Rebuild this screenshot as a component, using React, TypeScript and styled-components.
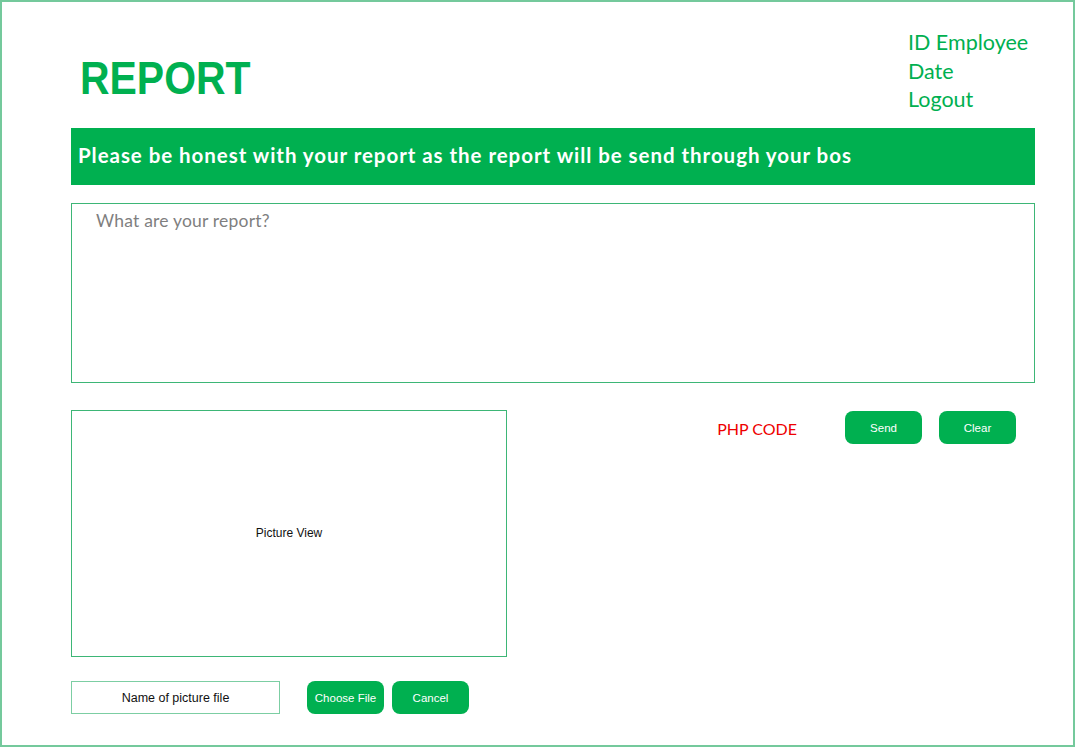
import { createGlobalStyle, styled } from "styled-components";

const GlobalStyle = createGlobalStyle`
  html, body {
    margin: 0;
    padding: 0;
    background: #ffffff;
  }
  * {
    box-sizing: border-box;
  }
`;

const Frame = styled.div`
  width: 1075px;
  height: 747px;
  border: 2px solid #74c99c;
  padding: 0 38px 0 69px;
  display: flex;
  flex-direction: column;
  font-family: Lato, "Liberation Sans", sans-serif;
`;

const Header = styled.div`
  height: 126px;
  display: flex;
  justify-content: space-between;
  align-items: flex-start;
`;

const Title = styled.h1`
  margin: 53px 0 0 9px;
  font-family: "Liberation Sans", Arial, sans-serif;
  font-size: 46px;
  font-weight: 700;
  line-height: 1;
  color: #00b050;
  transform: scaleX(0.89);
  transform-origin: left center;
`;

const UserMenu = styled.ul`
  list-style: none;
  margin: 26px 0 0 0;
  padding: 0;
  width: 127px;
  li {
    font-size: 21.5px;
    line-height: 28.5px;
    color: #00b050;
    cursor: pointer;
  }
`;

const Banner = styled.div`
  height: 57px;
  background-color: #00b050;
  color: #ffffff;
  font-weight: 700;
  font-size: 20.5px;
  letter-spacing: 0.95px;
  display: flex;
  align-items: center;
  padding: 0 0 3px 7px;
`;

const ReportInput = styled.textarea`
  margin-top: 18px;
  height: 180px;
  width: 100%;
  border: 1px solid #3db676;
  resize: none;
  padding: 6px 24px;
  font-family: Lato, "Liberation Sans", sans-serif;
  font-size: 17.5px;
  letter-spacing: 0.2px;
  color: #333;
  outline: none;
  &::placeholder {
    color: #7f7f7f;
  }
`;

const Middle = styled.div`
  margin-top: 27px;
  display: flex;
  align-items: flex-start;
`;

const PictureView = styled.div`
  width: 436px;
  height: 247px;
  border: 1px solid #3db676;
  display: flex;
  align-items: center;
  justify-content: center;
  font-family: "Liberation Sans", Arial, sans-serif;
  font-size: 12px;
  color: #111;
  padding-bottom: 2px;
`;

const Actions = styled.div`
  flex: 1;
  display: flex;
  align-items: center;
  justify-content: flex-end;
  gap: 17px;
  padding-right: 19px;
  margin-top: 1px;
`;

const PhpCode = styled.span`
  color: #ee0000;
  font-size: 16px;
  margin-right: 31px;
  padding-top: 2px;
`;

const Button = styled.button`
  width: 77px;
  height: 33px;
  border: none;
  border-radius: 8px;
  background-color: #00b050;
  color: #ffffff;
  font-family: "Liberation Sans", Arial, sans-serif;
  font-size: 11.5px;
  cursor: pointer;
  padding: 0;
`;

const Bottom = styled.div`
  margin-top: 24px;
  display: flex;
  align-items: center;
  gap: 8px;
`;

const FileName = styled.div`
  width: 209px;
  height: 33px;
  border: 1px solid #7ccea3;
  display: flex;
  align-items: center;
  justify-content: center;
  font-family: "Liberation Sans", Arial, sans-serif;
  font-size: 12.5px;
  color: #111;
  margin-right: 19px;
`;

export default function App() {
  return (
    <>
      <GlobalStyle />
      <Frame>
        <Header>
          <Title>REPORT</Title>
          <UserMenu>
            <li>ID Employee</li>
            <li>Date</li>
            <li>Logout</li>
          </UserMenu>
        </Header>
        <Banner>
          Please be honest with your report as the report will be send through your bos
        </Banner>
        <ReportInput placeholder="What are your report?" />
        <Middle>
          <PictureView>Picture View</PictureView>
          <Actions>
            <PhpCode>PHP CODE</PhpCode>
            <Button>Send</Button>
            <Button>Clear</Button>
          </Actions>
        </Middle>
        <Bottom>
          <FileName>Name of picture file</FileName>
          <Button>Choose File</Button>
          <Button>Cancel</Button>
        </Bottom>
      </Frame>
    </>
  );
}
